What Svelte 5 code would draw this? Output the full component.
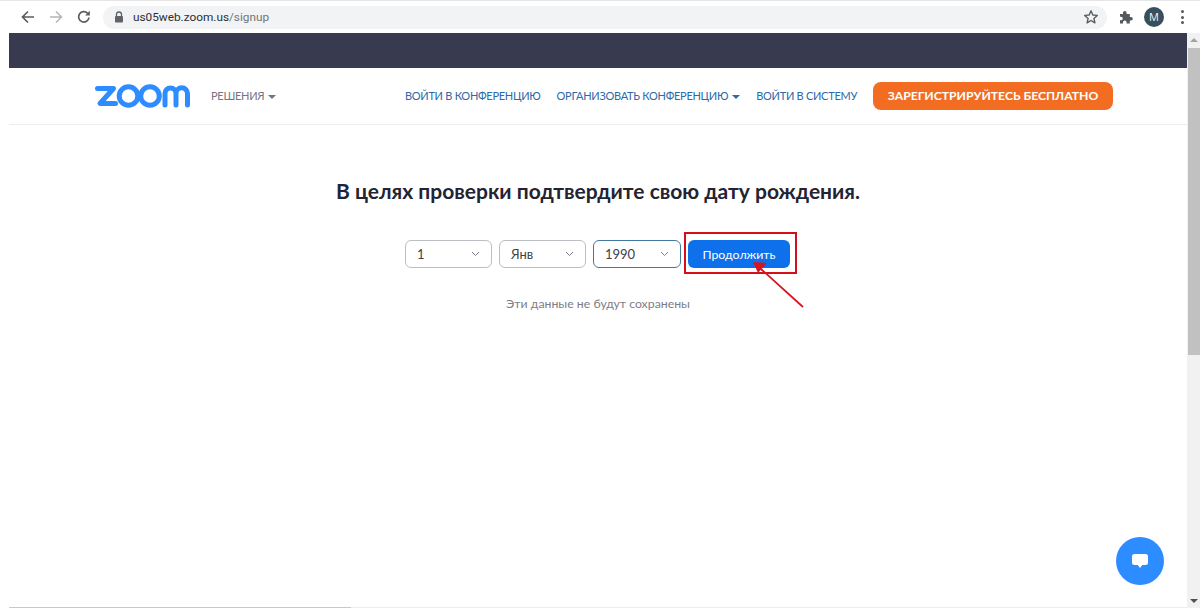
<script>
    const selects = [
        { value: "1", width: 87 },
        { value: "Янв", width: 87 },
        { value: "1990", width: 88, active: true },
    ];
</script>

<div class="window">
    <header class="toolbar">
        <button class="tool" aria-label="Назад">
            <svg width="16" height="16" viewBox="0 0 16 16"><path d="M14 8H3M8 2.500 2.500 8 8 13.500" fill="none" stroke="#5a5d60" stroke-width="1.700" /></svg>
        </button>
        <button class="tool" aria-label="Вперёд">
            <svg width="16" height="16" viewBox="0 0 16 16"><path d="M2 8h11M8 2.500 13.500 8 8 13.500" fill="none" stroke="#b4b6b8" stroke-width="1.500" /></svg>
        </button>
        <button class="tool" aria-label="Обновить">
            <svg width="16" height="16" viewBox="0 0 16 16"><path d="M13 8.500A5.200 5.200 0 1 1 11.600 4.300" fill="none" stroke="#5a5d60" stroke-width="1.700" /><path d="M13.800 1.800v4.600H9.200z" fill="#5a5d60" /></svg>
        </button>
        <div class="omnibox">
            <svg width="10" height="12" viewBox="0 0 10 12"><path d="M2.500 5V3.500a2.500 2.500 0 0 1 5 0V5" fill="none" stroke="#5f6368" stroke-width="1.300" /><rect x="1" y="5" width="8" height="6.500" rx="1" fill="#5f6368" /></svg>
            <span class="url">us05web.zoom.us<span class="path">/signup</span></span>
            <svg class="star" width="16" height="16" viewBox="0 0 16 16"><path d="M8 1.800 9.800 6l4.500.4-3.400 3 1 4.400L8 11.500l-3.900 2.300 1-4.400-3.400-3L6.200 6z" fill="none" stroke="#5a5d60" stroke-width="1.400" stroke-linejoin="round" /></svg>
        </div>
        <svg class="puzzle" width="14" height="14" viewBox="0 0 14 14"><path d="M1 4h3V2.800a1.800 1.800 0 0 1 3.600 0V4h3.200v3H12a1.800 1.800 0 0 1 0 3.600h-1.200V13.500H7.600v-1.200a1.800 1.800 0 0 0-3.600 0v1.200H1v-3.200h1a1.800 1.800 0 0 0 0-3.600H1z" fill="#55585c" /></svg>
        <div class="avatar">M</div>
        <div class="dots"><i></i><i></i><i></i></div>
    </header>

    <div class="body">
        <div class="page">
            <div class="banner"></div>
            <nav class="nav">
                <svg class="logo" width="97" height="24" viewBox="0 0 97 24" aria-label="zoom">
                    <path d="M2.500 4.500h16L5 19.500h15.500" fill="none" stroke="#2d8cff" stroke-width="5" stroke-linecap="round" stroke-linejoin="round" />
                    <circle cx="33.500" cy="12" r="9.300" fill="none" stroke="#2d8cff" stroke-width="5" />
                    <circle cx="55" cy="12" r="9.300" fill="none" stroke="#2d8cff" stroke-width="5" />
                    <path d="M70 21V9.500a5.500 5.500 0 0 1 11 0V21M81 9.500a5.500 5.500 0 0 1 11.500 0V21" fill="none" stroke="#2d8cff" stroke-width="5" stroke-linecap="round" />
                </svg>
                <a class="solutions" href="#solutions">РЕШЕНИЯ<span class="caret"></span></a>
                <div class="links">
                    <a href="#join">ВОЙТИ В КОНФЕРЕНЦИЮ</a>
                    <a href="#host">ОРГАНИЗОВАТЬ КОНФЕРЕНЦИЮ<span class="caret"></span></a>
                    <a href="#signin">ВОЙТИ В СИСТЕМУ</a>
                </div>
                <button class="signup">ЗАРЕГИСТРИРУЙТЕСЬ БЕСПЛАТНО</button>
            </nav>

            <main class="content">
                <h1>В целях проверки подтвердите свою дату рождения.</h1>
                <div class="form">
                    {#each selects as s}
                        <div class="select" class:active={s.active} style="width: {s.width}px">
                            <span>{s.value}</span>
                            <svg width="9" height="6" viewBox="0 0 9 6"><path d="M1 1l3.500 3.500L8 1" fill="none" stroke="#7b8086" stroke-width="1" /></svg>
                        </div>
                    {/each}
                    <div class="continue-wrap">
                        <button class="continue">Продолжить</button>
                        <div class="highlight"></div>
                    </div>
                </div>
                <p class="note">Эти данные не будут сохранены</p>
            </main>

            <svg class="arrow" width="70" height="65" viewBox="0 0 70 65">
                <path d="M58 53 16 15" stroke="#d9141e" stroke-width="1.800" fill="none" />
                <path d="M8 8 22 9 13 19z" fill="#d9141e" />
            </svg>

            <button class="chat" aria-label="Чат">
                <svg width="18" height="18" viewBox="0 0 18 18"><path d="M3.500 2h11A2.500 2.500 0 0 1 17 4.500v6a2.500 2.500 0 0 1-2.500 2.500h-3.300L9 16l-2.200-3H3.500A2.500 2.500 0 0 1 1 10.500v-6A2.500 2.500 0 0 1 3.500 2z" fill="#fff" /></svg>
            </button>
        </div>

        <div class="scrollbar">
            <span class="up"></span>
            <div class="thumb"></div>
            <span class="down"></span>
        </div>
    </div>
</div>

<style>
    :global(body) {
        margin: 0;
        background: #fff;
    }
    .window {
        width: 1200px;
        height: 608px;
        display: flex;
        flex-direction: column;
        overflow: hidden;
        font-family: Lato, "Open Sans", "Liberation Sans", sans-serif;
    }

    /* browser chrome */
    .toolbar {
        height: 33px;
        box-sizing: border-box;
        border-top: 1px solid #e6e6e6;
        display: flex;
        align-items: center;
        padding-left: 14px;
        flex-shrink: 0;
    }
    .tool {
        width: 28px;
        height: 28px;
        padding: 0;
        border: none;
        background: none;
        display: flex;
        align-items: center;
        justify-content: center;
    }
    .omnibox {
        width: 1004px;
        height: 23px;
        margin-left: 5px;
        padding: 0 8px 0 11px;
        box-sizing: border-box;
        background: #f1f3f4;
        border-radius: 12px;
        display: flex;
        align-items: center;
        gap: 9px;
    }
    .url {
        font-family: Roboto, "Liberation Sans", sans-serif;
        font-size: 11.800px;
        color: #2c2f33;
    }
    .path {
        color: #70757a;
    }
    .star {
        margin-left: auto;
    }
    .puzzle {
        margin-left: 12px;
    }
    .avatar {
        width: 20px;
        height: 20px;
        margin-left: 11px;
        border-radius: 50%;
        background: #37505f;
        color: #f2f5f7;
        font-family: "Open Sans", "Liberation Sans", sans-serif;
        font-size: 11px;
        line-height: 20px;
        text-align: center;
    }
    .dots {
        margin-left: 17px;
        display: flex;
        flex-direction: column;
        gap: 2.500px;
    }
    .dots i {
        width: 3px;
        height: 3px;
        border-radius: 50%;
        background: #55585c;
    }

    .body {
        flex: 1;
        display: flex;
        padding-left: 9px;
        min-height: 0;
    }
    .page {
        flex: 1;
        position: relative;
        border-bottom: 1px solid #e8e8e8;
        /* darker only under the left part, as in the capture */
        border-image: linear-gradient(90deg, #c8c8c8 342px, #ececec 342px) 1;
    }
    .banner {
        height: 35px;
        background: #383a50;
    }

    /* site nav */
    .nav {
        height: 57px;
        box-sizing: border-box;
        border-bottom: 1px solid #ececf0;
        padding: 0 74px 1px 86px;
        display: flex;
        align-items: center;
    }
    .logo {
        flex-shrink: 0;
    }
    .nav a {
        text-decoration: none;
        font-size: 11px;
        letter-spacing: -0.28px;
        white-space: nowrap;
        color: #2c6aa9;
    }
    .nav a.solutions {
        margin-left: 19px;
        color: #747487;
    }
    .caret {
        display: inline-block;
        margin-left: 4px;
        vertical-align: middle;
        border-top: 4px solid currentColor;
        border-left: 4px solid transparent;
        border-right: 4px solid transparent;
    }
    .links {
        margin-left: auto;
        display: flex;
        gap: 16px;
    }
    .signup {
        width: 240px;
        height: 28px;
        margin-left: 16px;
        padding: 0;
        border: none;
        border-radius: 8px;
        background: #f26d21;
        color: #fff;
        font-family: inherit;
        font-size: 12.200px;
        font-weight: 700;
        white-space: nowrap;
    }

    /* birth date form */
    .content {
        display: flex;
        flex-direction: column;
        align-items: center;
    }
    h1 {
        margin: 53px 0 0;
        font-size: 21px;
        line-height: 26px;
        font-weight: 700;
        color: #232333;
    }
    .form {
        margin-top: 36px;
        margin-right: 1px;
        display: flex;
        gap: 7px;
    }
    .select {
        height: 28px;
        box-sizing: border-box;
        padding: 0 11px;
        border: 1px solid #bdbdc4;
        border-radius: 6px;
        display: flex;
        align-items: center;
        justify-content: space-between;
        font-size: 13px;
        color: #3f4045;
    }
    .select.active {
        border-color: #44799f;
    }
    .continue-wrap {
        position: relative;
    }
    .continue {
        display: block;
        width: 102px;
        height: 28px;
        padding: 0;
        border: none;
        border-radius: 6px;
        background: #0e71eb;
        color: #fff;
        font-family: inherit;
        font-size: 12.300px;
    }
    .highlight {
        position: absolute;
        left: -4px;
        top: -8px;
        width: 113px;
        height: 42px;
        box-sizing: border-box;
        border: 2px solid #d2101c;
    }
    .note {
        margin: 27px 0 0;
        font-size: 12.300px;
        line-height: 18px;
        color: #7d7d88;
    }
    .arrow {
        position: absolute;
        left: 736px;
        top: 221px;
    }

    .chat {
        position: absolute;
        left: 1107px;
        top: 504px;
        width: 48px;
        height: 48px;
        padding: 0;
        border: none;
        border-radius: 50%;
        background: #2d8cff;
        display: flex;
        align-items: center;
        justify-content: center;
    }

    /* page scrollbar */
    .scrollbar {
        width: 13px;
        background: #f1f1f1;
        display: flex;
        flex-direction: column;
        align-items: center;
    }
    .up,
    .down {
        width: 0;
        height: 0;
        border-left: 4px solid transparent;
        border-right: 4px solid transparent;
    }
    .up {
        margin-top: 5px;
        border-bottom: 4px solid #a3a3a3;
    }
    .thumb {
        width: 12px;
        height: 307px;
        margin-top: 6px;
        margin-left: 1px;
        background: #c1c1c1;
    }
    .down {
        margin-top: auto;
        margin-bottom: 5px;
        border-top: 4px solid #505050;
    }
</style>
